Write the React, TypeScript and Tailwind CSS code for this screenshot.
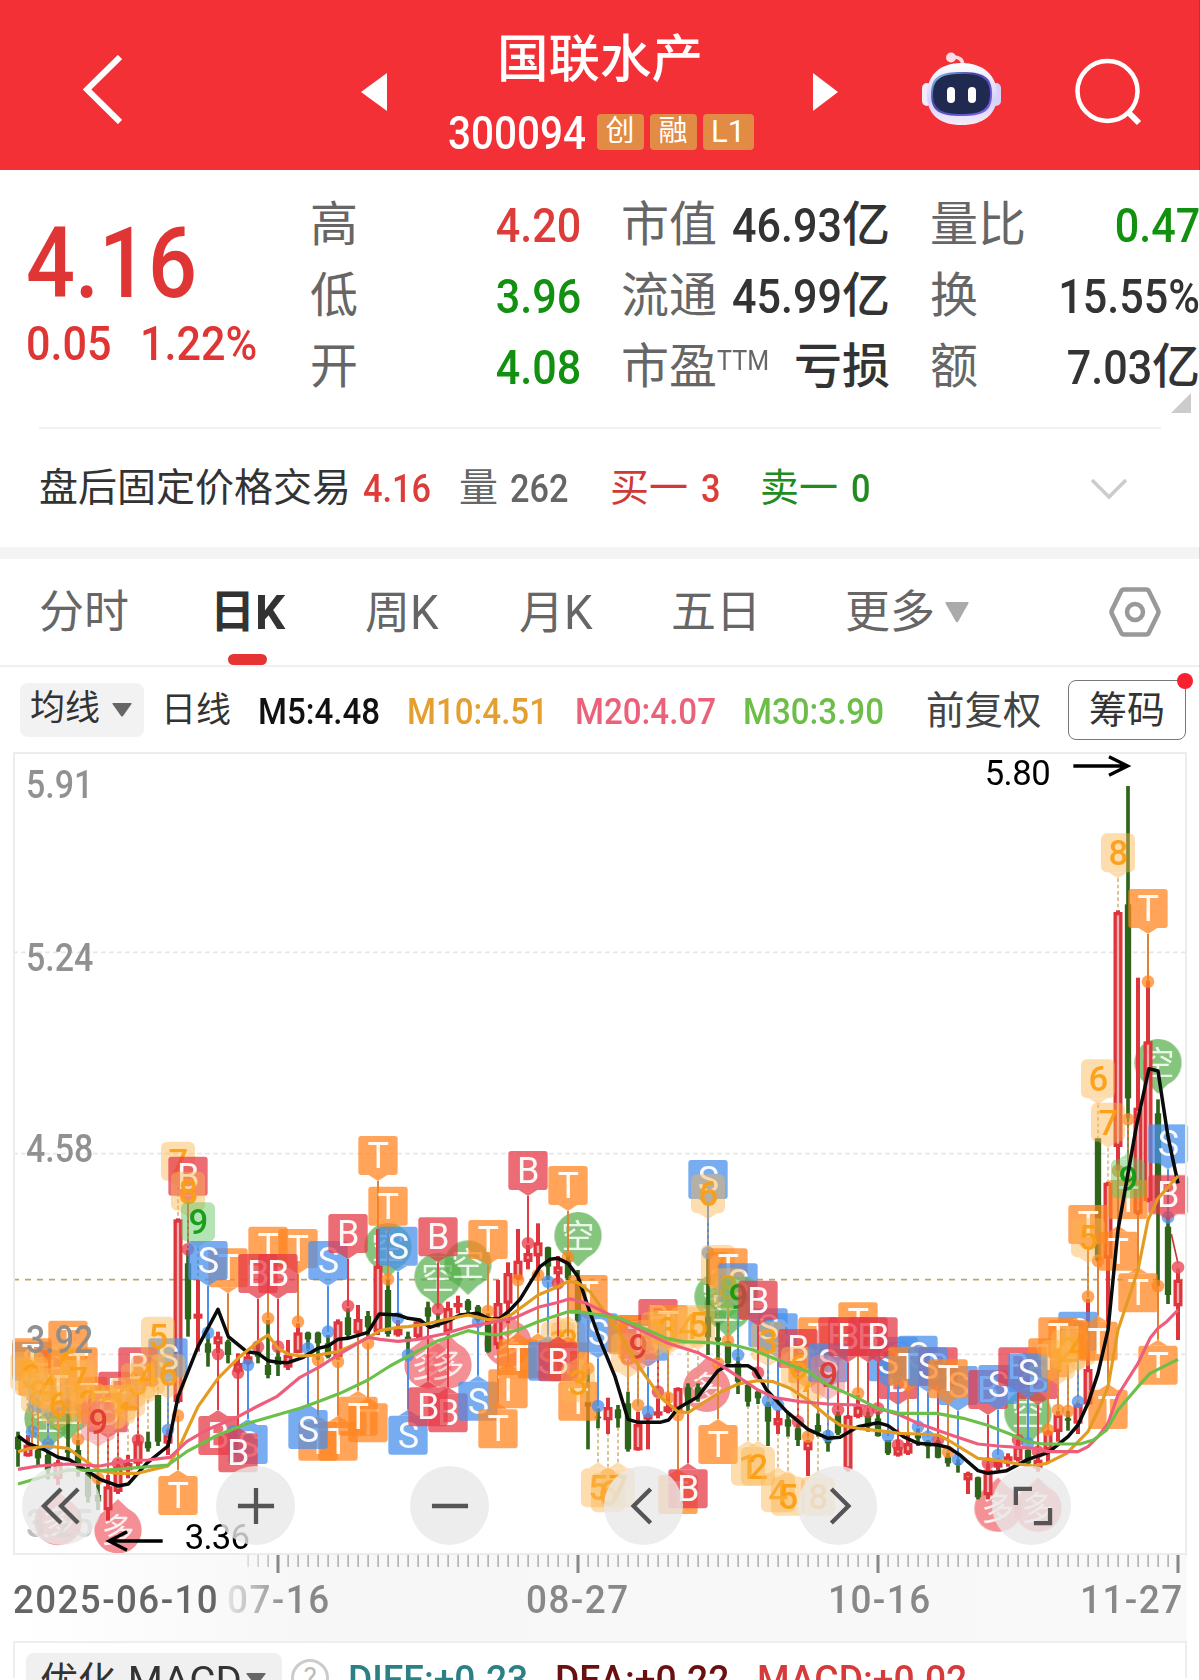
import { ReactNode } from 'react';

type Candle = [number, number, number, number, number]; // up, high, bodyTop, bodyBottom, low
type Pin = [string, number, number, number, number?]; // label, x, box top, stem end, dot

const CANDLES: Candle[] = [
  [0, 905, 920, 958, 1010], [1, 915, 945, 978, 980], [0, 950, 960, 985, 1010], [0, 965, 975, 1020, 1048],
  [1, 990, 998, 1046, 1065], [0, 850, 960, 968, 985], [0, 930, 960, 1010, 1040], [0, 1010, 1028, 1100, 1118],
  [0, 1050, 1095, 1115, 1140], [1, 1035, 1070, 1140, 1172], [1, 1000, 1010, 1085, 1092], [1, 975, 1000, 1020, 1045],
  [1, 915, 935, 1000, 1010], [0, 905, 935, 955, 965], [0, 795, 795, 935, 948], [1, 900, 915, 940, 975],
  [1, 265, 269, 815, 820], [0, 360, 400, 568, 620], [1, 450, 552, 565, 665], [0, 610, 640, 668, 710],
  [1, 605, 620, 642, 670], [0, 630, 635, 675, 700], [1, 670, 700, 725, 730], [1, 660, 680, 700, 705],
  [0, 640, 665, 680, 700], [0, 570, 705, 735, 745], [0, 655, 680, 705, 738], [1, 630, 675, 712, 720],
  [1, 580, 608, 668, 670], [0, 605, 608, 628, 660], [0, 605, 608, 640, 690], [0, 615, 640, 680, 685],
  [1, 568, 575, 680, 690], [0, 535, 562, 615, 625], [1, 525, 568, 610, 620], [0, 543, 558, 592, 625],
  [1, 297, 408, 605, 615], [0, 450, 480, 612, 620], [1, 570, 598, 615, 620], [0, 605, 620, 635, 675],
  [1, 568, 575, 620, 630], [0, 515, 532, 560, 580], [0, 550, 570, 580, 592], [1, 515, 535, 605, 615],
  [1, 497, 520, 525, 550], [0, 507, 512, 540, 550], [0, 525, 530, 570, 575], [0, 550, 560, 665, 668],
  [1, 450, 520, 645, 658], [1, 397, 430, 520, 580], [1, 297, 393, 445, 450], [1, 345, 370, 395, 418],
  [1, 280, 338, 378, 440], [0, 350, 352, 410, 450], [1, 378, 410, 432, 460], [0, 375, 390, 445, 450],
  [0, 420, 450, 572, 578], [0, 715, 815, 830, 958], [0, 835, 860, 865, 895], [1, 803, 832, 870, 912],
  [0, 825, 838, 865, 893], [0, 785, 820, 958, 965], [1, 845, 883, 960, 962], [1, 848, 855, 868, 958],
  [1, 805, 845, 852, 865], [1, 790, 830, 845, 850], [1, 772, 775, 848, 850], [0, 760, 772, 820, 850],
  [0, 760, 772, 800, 815], [0, 368, 560, 622, 675], [0, 577, 622, 632, 690], [0, 632, 635, 700, 705],
  [0, 680, 700, 755, 792], [0, 760, 765, 815, 830], [0, 780, 785, 805, 822], [0, 815, 822, 875, 948],
  [1, 840, 865, 885, 912], [0, 850, 868, 890, 920], [0, 880, 895, 930, 948], [1, 930, 935, 960, 1038],
  [0, 850, 885, 905, 920], [0, 900, 915, 940, 965], [0, 845, 855, 910, 915], [1, 855, 858, 1018, 1025],
  [1, 795, 830, 860, 865], [0, 845, 858, 890, 905], [0, 845, 865, 918, 920], [0, 930, 930, 970, 975],
  [1, 930, 952, 976, 980], [1, 915, 940, 970, 975], [0, 895, 915, 925, 948], [0, 930, 935, 950, 985],
  [0, 930, 935, 983, 985], [0, 968, 980, 1000, 1010], [0, 988, 1000, 1005, 1028], [1, 1025, 1030, 1050, 1092],
  [0, 1040, 1042, 1102, 1108], [1, 1000, 1020, 1095, 1108], [1, 985, 995, 1012, 1020], [1, 970, 980, 1000, 1010],
  [1, 930, 950, 990, 995], [0, 950, 960, 1000, 1003], [1, 970, 990, 1015, 1025], [1, 900, 905, 960, 1000],
  [1, 843, 855, 905, 935], [0, 843, 865, 872, 902], [1, 818, 824, 880, 912], [1, 507, 718, 822, 825],
  [0, 25, 25, 390, 395], [1, 155, 159, 385, 600], [1, -659, -653, 50, 122], [0, -1033, -677, -95, -35],
  [1, -457, -66, 250, 255], [1, -448, -265, 212, 217], [0, -92, -50, 205, 468], [0, 262, 290, 495, 522],
  [1, 415, 450, 528, 630],
];

const MA5 =
  '54,918 84,940 130,958 174,982 210,990 260,1022 300,1048 355,1068 385,1062 440,1000 504,948 534,800 594,650 654,538 685,620 740,665 774,670 804,692 834,697 864,698 910,682 954,655 984,648 1014,628 1044,625 1104,607 1138,552 1194,555 1224,565 1260,570 1290,592 1340,575 1380,555 1434,550 1470,568 1500,565 1530,540 1560,508 1620,410 1650,388 1674,385 1704,400 1734,440 1764,530 1800,630 1845,740 1884,868 1914,877 1980,877 2006,870 2034,835 2094,800 2154,722 2180,707 2244,707 2265,720 2300,780 2360,845 2424,898 2484,925 2520,922 2574,890 2634,878 2664,887 2710,920 2754,940 2814,945 2844,952 2880,975 2934,1022 2964,1030 3020,1022 3084,988 3144,968 3204,920 3234,885 3264,820 3294,730 3324,600 3354,300 3384,130 3409,-10 3447,-184 3474,-177 3504,20 3534,160';
const MA10 =
  '54,965 90,955 140,948 204,955 260,995 300,1022 354,1030 414,1030 444,1022 504,1008 534,960 594,830 654,745 714,685 774,635 804,615 834,655 864,672 900,678 954,675 1014,665 1060,645 1110,620 1140,602 1194,592 1224,590 1280,582 1330,570 1404,555 1460,568 1500,570 1540,550 1614,495 1674,470 1704,455 1734,458 1770,485 1820,555 1860,610 1884,655 1914,705 1980,800 2034,845 2064,848 2100,825 2154,790 2214,762 2274,752 2320,755 2370,775 2424,810 2484,860 2520,885 2574,895 2634,902 2700,910 2754,912 2814,915 2844,930 2934,985 3000,992 3054,1002 3100,1008 3140,1000 3200,970 3264,905 3300,830 3324,770 3354,600 3414,420 3444,270 3474,205 3534,138';
const MA20 =
  '54,1018 114,1008 204,1002 300,1008 384,992 444,990 510,982 560,935 620,900 714,860 774,828 830,800 900,742 960,710 1014,675 1104,622 1140,628 1194,634 1254,628 1330,612 1404,590 1460,580 1540,565 1614,532 1670,518 1710,506 1760,520 1800,540 1900,590 2004,640 2094,668 2154,700 2214,740 2274,780 2324,803 2400,815 2484,822 2574,825 2634,835 2700,855 2754,880 2844,912 2934,942 2994,948 3100,955 3144,965 3234,965 3264,950 3294,920 3324,880 3354,795 3414,700 3450,625 3474,595 3500,575 3534,540';
const MA30 =
  '54,1062 130,1040 204,1020 300,1022 384,1015 504,1005 560,965 654,915 744,880 830,855 900,835 954,815 1020,790 1104,750 1170,708 1240,670 1314,632 1404,602 1440,610 1490,615 1554,600 1614,575 1704,545 1734,545 1800,555 1860,565 1920,590 2000,625 2050,635 2130,638 2200,645 2260,660 2334,690 2424,725 2484,765 2574,805 2634,835 2700,850 2760,850 2810,850 2890,865 2960,885 3030,912 3080,935 3130,942 3240,942 3280,930 3320,900 3354,840 3414,770 3450,730 3534,688';

// round signals: 空 above the bar, 多 below it
const BUBBLES: [string, number, number][] = [
  ['空', 144, 865], ['空', 204, 840], ['空', 1164, 350], ['空', 1314, 440], ['空', 1404, 402], ['空', 1734, 317],
  ['空', 2154, 500], ['空', 2184, 530], ['空', 3084, 850], ['空', 3474, -202],
  ['多', 174, 1175], ['多', 354, 1200], ['多', 1284, 705], ['多', 1344, 705], ['多', 1524, 640], ['多', 2120, 775],
  ['多', 2994, 1135], ['多', 3114, 1135],
];

const PINS: Pin[] = [
  ['S', 96, 635, 905, 1], ['B', 174, 660, 990], ['T', 204, 572, 850], ['T', 114, 680, 950], ['T', 96, 625, 950],
  ['T', 234, 652, 928, 1], ['S', 144, 730, 943, 1], ['T', 174, 718, 990], ['T', 264, 740, 1010],
  ['B', 354, 725, 1000, 1], ['T', 294, 765, 1045, 1], ['B', 324, 790, 1035],
  ['8', 82, 665, 905], ['3', 94, 680, 905], ['8', 114, 730, 950], ['4', 144, 715, 960],
  ['S', 504, 625, 900, 1], ['B', 414, 652, 930, 1],
  ['6', 174, 765, 990], ['6', 204, 640, 850], ['7', 234, 690, 930], ['2', 264, 760, 1010], ['3', 324, 780, 1035],
  ['5', 474, 560, 795],
  ['1', 354, 765, 1000], ['2', 384, 742, 975], ['3', 414, 700, 915], ['4', 444, 675, 905], ['6', 504, 672, 900],
  ['9r', 294, 815, 1050],
  ['7', 534, 35, 265], ['B', 564, 80, 358, 1], ['8', 564, 125, 360], ['9g', 594, 217, 450],
  ['T', 684, 355, 630], ['S', 624, 333, 608, 1], ['T', 804, 290, 565, 1], ['T', 894, 297, 575, 1],
  ['B', 774, 372, 650, 1], ['B', 834, 372, 650, 1],
  ['T', 534, 1038, 857, 1], ['B', 654, 858, 672, 1], ['S', 744, 885, 705, 1], ['B', 714, 910, 728, 1],
  ['S', 984, 333, 605, 1], ['B', 1044, 252, 528, 1], ['T', 1134, 18, 297], ['T', 1164, 170, 448, 1],
  ['S', 1194, 290, 565, 1], ['B', 1314, 262, 538, 1], ['T', 1464, 270, 543, 1], ['B', 1584, 63, 340, 1],
  ['T', 1704, 108, 382, 1], ['T', 1764, 435, 715, 1],
  ['T', 954, 875, 690, 1], ['T', 1014, 875, 695, 1], ['S', 924, 840, 655, 1], ['T', 1104, 820, 640, 1],
  ['T', 1074, 800, 620], ['S', 1224, 857, 675, 1], ['B', 1344, 790, 615], ['B', 1284, 772, 580],
  ['S', 1434, 755, 575, 1], ['T', 1494, 838, 660], ['T', 1524, 718, 580], ['T', 1614, 628, 435, 1],
  ['T', 1554, 628, 450, 1], ['S', 1644, 635, 455, 1], ['1', 1674, 575, 470], ['2', 1704, 575, 450],
  ['T', 1704, 637, 450], ['B', 1674, 637, 460, 1], ['T', 1734, 755, 578], ['3', 1734, 700, 578],
  ['5', 1794, 1015, 895], ['6', 1824, 1030, 912], ['7', 1854, 1015, 893],
  ['S', 1794, 550, 828, 1], ['T', 1884, 555, 785], ['T', 1914, 555, 825, 1], ['B', 1974, 507, 785, 1],
  ['S', 1944, 575, 845, 1], ['T', 2004, 525, 803, 1], ['T', 1914, 570, 825],
  ['8', 1884, 610, 785], ['9r', 1914, 590, 845], ['1', 1974, 545, 805], ['3', 2004, 540, 790], ['4', 2064, 530, 760],
  ['5', 2094, 525, 760], ['T', 2034, 1035, 855, 1], ['B', 2064, 1018, 850], ['T', 2154, 885, 700, 1],
  ['S', 2124, 90, 368, 1], ['6', 2124, 133, 368], ['7', 2154, 345, 577], ['T', 2184, 355, 632, 1],
  ['S', 2214, 400, 675, 1], ['8', 2184, 415, 632], ['9g', 2214, 440, 680],
  ['S', 2334, 550, 825, 1], ['S', 2304, 535, 812, 1], ['3', 2304, 575, 815], ['B', 2274, 452, 728, 1],
  ['T', 2454, 562, 850], ['T', 2424, 642, 920, 1], ['7', 2424, 690, 930], ['B', 2394, 597, 875, 1], ['6', 2394, 650, 880],
  ['B', 2514, 562, 840, 1], ['S', 2484, 640, 918, 1], ['9r', 2484, 675, 900],
  ['T', 2574, 517, 790, 1], ['B', 2544, 562, 855], ['B', 2694, 690, 945, 1], ['S', 2694, 620, 895], ['S', 2664, 637, 918, 1],
  ['B', 2604, 562, 845, 1], ['B', 2634, 562, 835, 1],
  ['1', 2244, 950, 830], ['2', 2274, 950, 822], ['4', 2334, 1030, 912], ['5', 2364, 1040, 920], ['8', 2454, 1040, 920],
  ['S', 2754, 617, 890, 1], ['T', 2724, 650, 915],
  ['B', 2814, 652, 930, 1], ['S', 2784, 652, 920, 1], ['S', 2874, 708, 988, 1], ['T', 2844, 688, 965, 1],
  ['B', 2964, 720, 1000, 1], ['S', 2994, 705, 975, 1], ['B', 3054, 652, 930, 1], ['B', 3114, 690, 965, 1],
  ['T', 3144, 625, 900, 1], ['S', 3084, 670, 940, 1], ['S', 3234, 545, 815, 1], ['T', 3204, 570, 843, 1],
  ['T', 3174, 562, 840, 1], ['1', 3174, 630, 843], ['2', 3204, 600, 843], ['4', 3234, 590, 818],
  ['T', 3294, 575, 392, 1], ['T', 3264, 225, 500, 1], ['5', 3264, 265, 507], ['T', 3324, 780, 600],
  ['T', 3384, 150, -32, 1], ['T', 3354, 305, 122, 1], ['9g', 3384, 88, -35], ['T', 3414, 430, 255],
  ['T', 3474, 647, 468, 1], ['S', 3504, -17, 262, 1], ['B', 3504, 135, 262],
  ['6', 3294, -212, 25], ['7', 3324, -82, 155], ['8', 3354, -890, -659], ['T', 3444, -723, -445, 1],
];

const PIN_COLORS: Record<string, string> = { T: '#ff8520', B: '#e63946', S: '#4a8fec' };

function PinMark({ pin: [kind, x, top, end, dot] }: { pin: Pin }) {
  const label = kind[0];
  const isNumber = label >= '0' && label <= '9';
  const below = top > end;
  const w = isNumber ? 102 : 118;
  const h = 117;
  const edge = below ? top : top + h;
  const tip = below ? top - 18 : top + h + 18;
  let fill = isNumber ? '#fbb550' : PIN_COLORS[label];
  let color = isNumber ? '#fb9e14' : '#fff';
  let stem = isNumber ? '#c9a45c' : fill;
  if (label === 'T') stem = '#dd8238';
  if (kind === '9g') {
    fill = '#5cc25c';
    color = '#109a14';
    stem = '#3f9a5c';
  }
  if (kind === '9r') {
    fill = '#f4777f';
    color = '#e03a30';
  }
  return (
    <g>
      <line
        x1={x}
        x2={x}
        y1={tip}
        y2={end}
        stroke={stem}
        strokeWidth={isNumber ? 4 : 6}
        strokeDasharray={isNumber ? '11 8' : undefined}
      />
      {dot && <circle cx={x} cy={end} r={19} fill={fill} opacity={0.75} />}
      <g fill={fill} opacity={isNumber ? 0.46 : 0.74}>
        <rect x={x - w / 2} y={top} width={w} height={h} rx={isNumber ? 18 : 9} />
        <polygon points={`${x - 28},${edge} ${x + 28},${edge} ${x},${tip}`} />
      </g>
      <text
        x={x + 1}
        y={top + 96}
        textAnchor="middle"
        fontSize={isNumber ? 104 : 108}
        fontWeight={isNumber ? 500 : 400}
        fill={color}
        opacity={0.95}
      >
        {label}
      </text>
    </g>
  );
}

function Bubble({ label, x, y }: { label: string; x: number; y: number }) {
  const long = label === '多';
  const s = long ? -1 : 1;
  return (
    <g opacity={0.72}>
      <g fill={long ? '#f0666c' : '#56ae4c'}>
        <circle cx={x} cy={y} r={71} />
        <polygon points={`${x - 34},${y + s * 60} ${x + 34},${y + s * 60} ${x},${y + s * 93}`} />
      </g>
      <text x={x} y={y + 36} textAnchor="middle" fontSize={100} fill="#fff" opacity={0.85}>
        {label}
      </text>
    </g>
  );
}

function KLineChart() {
  // 3 units per pixel, one bar every 30 units
  return (
    <svg
      viewBox="39 -1134 3519 2406"
      className="block h-[802px] w-[1173px] overflow-visible"
      fontFamily='Roboto, "Noto Sans CJK SC", sans-serif'
    >
      {[-533, 71, 673].map((y) => (
        <line key={y} x1={39} x2={3558} y1={y} y2={y} stroke="#e6e6e6" strokeWidth={5} strokeDasharray="14 10" />
      ))}
      <line x1={39} x2={3558} y1={449} y2={449} stroke="#bfa568" strokeWidth={5} strokeDasharray="18 18" />

      {BUBBLES.map(([label, x, y]) => (
        <Bubble key={`${label}${x}`} label={label} x={x} y={y} />
      ))}

      {CANDLES.map(([up, high, top, bottom, low], i) => {
        const x = 54 + i * 30;
        return up ? (
          <g key={i} stroke="#de343b" fill="#fff">
            <line x1={x} x2={x} y1={high} y2={low} strokeWidth={12} />
            <rect x={x - 8.5} y={top + 4} width={17} height={Math.max(bottom - top - 8, 3)} strokeWidth={10} fillOpacity={0.6} />
          </g>
        ) : (
          <g key={i} fill="#2f651b">
            <rect x={x - 5.5} y={high} width={11} height={low - high} />
            <rect x={x - 9.5} y={top} width={19} height={bottom - top} />
          </g>
        );
      })}

      {PINS.map((pin, i) => (
        <PinMark key={i} pin={pin} />
      ))}
      <line x1={3514} y1={312} x2={3534} y2={400} stroke="#c23a33" strokeWidth={5} />
      <circle cx={3534} cy={412} r={19} fill="#ec5360" opacity={0.85} />

      <g fill="none" strokeWidth={9.5} strokeLinejoin="round">
        <polyline points={MA5} stroke="#0b0b0b" strokeWidth={10.5} />
        <polyline points={MA10} stroke="#e39c1f" />
        <polyline points={MA20} stroke="#ee5e7c" />
        <polyline points={MA30} stroke="#6cc04a" />
      </g>

      <g fontSize={114} fontWeight={500} fill="#8c8c8c" opacity={0.95}>
        <text x={78} y={-996} textLength={202} lengthAdjust="spacingAndGlyphs">5.91</text>
        <text x={78} y={-477} textLength={202} lengthAdjust="spacingAndGlyphs">5.24</text>
        <text x={78} y={97} textLength={202} lengthAdjust="spacingAndGlyphs">4.58</text>
        <text x={78} y={669} textLength={202} lengthAdjust="spacingAndGlyphs">3.92</text>
        <text x={78} y={1220} textLength={202} lengthAdjust="spacingAndGlyphs" opacity={0.6}>3.25</text>
      </g>

      <g fontSize={104} fill="#000">
        <text x={2954} y={-1034} textLength={198}>5.80</text>
        <text x={554} y={1258} textLength={196}>3.36</text>
      </g>
      <g fill="none" stroke="#000" strokeWidth={10}>
        <path d="M3220-1092h160M3327-1120l56 28l-56 28" />
        <path d="M488 1233H330M381 1205l-54 28l54 28" />
      </g>
    </svg>
  );
}

function Num({ children, className = '' }: { children: ReactNode; className?: string }) {
  return <span className={`inline-block origin-left scale-x-[.88] font-medium whitespace-nowrap ${className}`}>{children}</span>;
}

function Caret({ className }: { className: string }) {
  return (
    <svg viewBox="0 0 20 14" preserveAspectRatio="none" className={className}>
      <path d="M1 0h18q1 0 .5 1L11 13q-1 1-2 0L.5 1Q0 0 1 0z" fill="currentColor" />
    </svg>
  );
}

function Header() {
  return (
    <header className="flex h-[170px] bg-[#f23036] text-white">
      <svg viewBox="0 0 39 69" className="mt-[55px] ml-[83px] h-[69px] w-[39px]">
        <path d="M37 2L4 34.500L37 67" fill="none" stroke="currentColor" strokeWidth="6" />
      </svg>
      <svg viewBox="0 0 26 38" className="mt-[73px] ml-[239px] h-[38px] w-[26px]">
        <path d="M26 0v38L0 19z" fill="currentColor" />
      </svg>
      <div className="flex w-[426px] flex-col items-center pt-[32px]">
        <h1 className="text-[51.500px] leading-[56px] font-medium">国联水产</h1>
        <div className="mt-[26px] ml-px flex h-[36px] w-[306px] items-center gap-[6px]">
          <Num className="w-[143px] pt-[2px] text-[46px] leading-[36px]">300094</Num>
          <span className="flex h-[36px] w-[47px] items-center justify-center rounded bg-[#e28b45] text-[29px]">创</span>
          <span className="flex h-[36px] w-[47px] items-center justify-center rounded bg-[#e28b45] text-[29px]">融</span>
          <span className="flex h-[36px] w-[51px] items-center justify-center rounded bg-[#e28b45] text-[31px]">L1</span>
        </div>
      </div>
      <svg viewBox="0 0 25 38" className="mt-[73px] h-[38px] w-[25px]">
        <path d="M0 0v38L25 19z" fill="currentColor" />
      </svg>
      <svg viewBox="0 0 80 74" className="mt-[52px] ml-[84px] h-[74px] w-[80px]">
        <defs>
          <linearGradient id="shell" x1="0" y1="0" x2="0" y2="1">
            <stop offset="0" stopColor="#fff" />
            <stop offset=".6" stopColor="#d6cffb" />
            <stop offset="1" stopColor="#f4ecf7" />
          </linearGradient>
          <linearGradient id="visor" x1="0" y1="0" x2="1" y2="1">
            <stop offset="0" stopColor="#8fd8ee" />
            <stop offset=".35" stopColor="#4a46a8" />
            <stop offset="1" stopColor="#7c63ee" />
          </linearGradient>
        </defs>
        <path d="M29 5q12-1 12 9" fill="none" stroke="#fbdbe4" strokeWidth="3.500" />
        <circle cx="29" cy="5.500" r="5" fill="#fbdbe4" />
        <rect x="0" y="31" width="10" height="23" rx="5" fill="#f1ebfd" />
        <rect x="69" y="31" width="10" height="23" rx="5" fill="#d9d0fa" />
        <path d="M39.500 11C61 11 75 23 75 43S61 73 39.500 73 5 63 5 43 18 11 39.500 11z" fill="url(#shell)" />
        <path d="M39.500 20C62 20 70 25 70 42S62 64 39.500 64 9 59 9 42s8-22 30.500-22z" fill="url(#visor)" />
        <path d="M39.500 22C60 22 68 27 68 42s-8 20-28.500 20S11 57 11 42s8-20 28.500-20z" fill="#202a50" />
        <rect x="25" y="35" width="8" height="16" rx="4" fill="#fff" />
        <rect x="46" y="35" width="8" height="16" rx="4" fill="#fff" />
      </svg>
      <svg viewBox="0 0 68 68" className="mt-[58px] ml-[73px] h-[68px] w-[68px]" fill="none" stroke="currentColor" strokeWidth="4.500">
        <circle cx="32.500" cy="33" r="30" />
        <path d="M53 54L64 65" strokeWidth="6" />
      </svg>
    </header>
  );
}

function Row({ label, children }: { label: ReactNode; children: ReactNode }) {
  return (
    <div className="flex h-[71px] items-center justify-between">
      <span className="text-[48px] leading-[71px] whitespace-nowrap text-[#666]">{label}</span>
      <span className="flex items-center pt-px text-[49px] leading-[71px] font-medium whitespace-nowrap">{children}</span>
    </div>
  );
}

function Quote() {
  return (
    <section className="relative flex h-[257px] overflow-hidden pt-[19px] text-[#333]">
      <div className="w-[310px] pl-[26px] text-[#e03535]">
        <div className="mt-[26px] h-[97px]">
          <Num className="scale-x-[.9] text-[98px] leading-[97px]">4.16</Num>
        </div>
        <div className="mt-[2px] flex h-[60px] items-center text-[49px]">
          <Num className="w-[114px]">0.05</Num>
          <Num>1.22%</Num>
        </div>
      </div>
      <div className="w-[271px]">
        <Row label="高"><Num className="origin-right text-[#dc3c3a]">4.20</Num></Row>
        <Row label="低"><Num className="origin-right text-[#12900f]">3.96</Num></Row>
        <Row label="开"><Num className="origin-right text-[#12900f]">4.08</Num></Row>
      </div>
      <div className="ml-[40px] w-[269px]">
        <Row label="市值"><Num className="origin-right">46.93</Num><span className="-mt-px text-[48px]">亿</span></Row>
        <Row label="流通"><Num className="origin-right">45.99</Num><span className="-mt-px text-[48px]">亿</span></Row>
        <div className="flex h-[71px] items-center justify-between leading-[71px] whitespace-nowrap">
          <span className="flex text-[48px] text-[#666]">
            市盈<span className="-mt-[5px] inline-block origin-left scale-x-[.93] text-[27px]">TTM</span>
          </span>
          <span className="text-[48px] font-medium">亏损</span>
        </div>
      </div>
      <div className="ml-[40px] w-[270px]">
        <Row label="量比"><Num className="origin-right text-[#12900f]">0.47</Num></Row>
        <Row label="换"><Num className="origin-right">15.55%</Num></Row>
        <Row label="额"><Num className="origin-right">7.03</Num><span className="-mt-px text-[48px]">亿</span></Row>
      </div>
      <svg viewBox="0 0 20 20" className="absolute right-[9px] bottom-[14px] size-5 text-[#ccc]">
        <path d="M20 0v20H0z" fill="currentColor" />
      </svg>
    </section>
  );
}

function AfterHours() {
  return (
    <section className="mx-[39px] flex h-[120px] items-center border-t-2 border-[#f1f1f1] pt-px text-[39px] whitespace-nowrap text-[#333]">
      <span className="w-[324px]">盘后固定价格交易</span>
      <Num className="w-[96px] pt-[2px] text-[39px] text-[#dc3c3a]">4.16</Num>
      <span className="w-[51px] text-[#666]">量</span>
      <Num className="w-[100px] pt-[2px] text-[39px] text-[#666]">262</Num>
      <span className="w-[91px] text-[#cf3a36]">买一</span>
      <Num className="w-[59px] pt-[2px] text-[39px] text-[#dc3c3a]">3</Num>
      <span className="w-[91px] text-[#228b1f]">卖一</span>
      <Num className="pt-[2px] text-[39px] text-[#228b1f]">0</Num>
      <svg viewBox="0 0 38 22" className="mr-[33px] ml-auto h-[22px] w-[38px]">
        <path d="M2 2l17 17L36 2" fill="none" stroke="#ccc" strokeWidth="3.500" />
      </svg>
    </section>
  );
}

function Tabs() {
  return (
    <nav className="flex h-[108px] items-center border-b-2 border-[#f0f0f0] text-[45px] whitespace-nowrap text-[#666]">
      <span className="ml-[39px] w-[171px] pt-[2px]">分时</span>
      <span className="relative flex h-full w-[155px] items-center pt-[2px] font-bold text-[#333]">
        日<span className="inline-block origin-left scale-x-[.97] text-[49px]">K</span>
        <i className="absolute bottom-0 left-[18px] h-[11px] w-[39px] rounded-full bg-[#e53433]" />
      </span>
      <span className="w-[154px] pt-[2px]">周<span className="inline-block origin-left scale-x-[.95] text-[48px]">K</span></span>
      <span className="w-[152px] pt-[2px]">月<span className="inline-block origin-left scale-x-[.95] text-[48px]">K</span></span>
      <span className="w-[174px] pt-[2px]">五日</span>
      <span className="pt-[2px]">更多</span>
      <Caret className="ml-[10px] h-[21px] w-[24px] text-[#aaa]" />
      <svg viewBox="0 0 52 50" className="mr-[39px] ml-auto h-[50px] w-[52px]" fill="none" stroke="#999" strokeWidth="4.500" strokeLinejoin="round">
        <path d="M15 2.500h22q2 0 3 2L49 23q1 2 0 4L40 45.500q-1 2-3 2H15q-2 0-3-2L3 27q-1-2 0-4L12 4.500q1-2 3-2z" />
        <circle cx="26" cy="25" r="8" />
      </svg>
    </nav>
  );
}

function Indicators() {
  return (
    <div className="flex h-[85px] items-center pl-[20px] whitespace-nowrap text-[#333]">
      <button className="flex h-[54px] w-[124px] items-center rounded-lg bg-[#f2f2f2] pl-[10px] text-[35px]">
        均线
        <Caret className="ml-[12px] h-[14px] w-[20px] text-[#666]" />
      </button>
      <span className="ml-[17px] w-[97px] pt-[4px] text-[35px]">日线</span>
      <Num className="w-[149px] scale-x-[.92] pt-[4px] text-[36px] text-[#111]">M5:4.48</Num>
      <Num className="w-[168px] scale-x-[.92] pt-[4px] text-[36px] text-[#e3a030]">M10:4.51</Num>
      <Num className="w-[168px] scale-x-[.92] pt-[4px] text-[36px] text-[#ea6279]">M20:4.07</Num>
      <Num className="w-[183px] scale-x-[.92] pt-[4px] text-[36px] text-[#6cbe49]">M30:3.90</Num>
      <span className="w-[142px] pt-[2px] text-[38.500px] text-[#444]">前复权</span>
      <button className="relative h-[60px] w-[118px] rounded-lg border border-[#777] text-[38px] leading-[58px]">
        筹码
        <i className="absolute -top-[8px] -right-[8px] size-4 rounded-full bg-[#fb2030]" />
      </button>
    </div>
  );
}

const ICONS = [
  'M19 2L1 20l18 18M37 2L19 20l18 18',
  'M20 1v38M1 20h38',
  'M1 20h38',
  'M27 2L9 20l18 18',
  'M13 2l18 18L13 38',
  'M20 2H3v17M39 22v16H22',
];

function Controls() {
  return (
    <div className="absolute top-[714px] left-[9px] flex gap-[115px]">
      {ICONS.map((d) => (
        <button key={d} className="flex size-[79px] items-center justify-center rounded-full bg-[#e8e8e8]/80">
          <svg viewBox="0 0 40 40" className="size-[38px] overflow-visible" fill="none" stroke="#555" strokeWidth="4.500">
            <path d={d} />
          </svg>
        </button>
      ))}
    </div>
  );
}

function TimeAxis() {
  return (
    <div className="mx-[13px] h-[86px] bg-linear-to-r from-white via-[#f7f7f7] via-25% to-[#f9f9f9]">
      <svg viewBox="0 0 1173 18" className="block h-[18px] w-[1173px]">
        {Array.from({ length: 94 }, (_, k) => {
          const major = k % 30 === 3;
          return (
            <rect
              key={k}
              x={235 + k * 10 - (major ? 1.5 : 0.5)}
              y={0}
              width={major ? 3 : 1.2}
              height={major ? 18 : 12}
              fill={major ? '#888' : '#999'}
              opacity={k < 3 ? 0.4 + k * 0.2 : 1}
            />
          );
        })}
      </svg>
      <div className="mt-[5px] flex text-[38px] leading-[44px] whitespace-nowrap text-[#888]">
        <Num className="w-[216px] scale-x-[.965] tracking-[1.500px] text-[#666]">2025-06-10</Num>
        <Num className="w-[302px] scale-x-[.97] tracking-[1.500px]">
          <span className="bg-linear-to-r from-[#e4e4e4] to-[#888] to-60% bg-clip-text text-transparent">07-16</span>
        </Num>
        <Num className="w-[304px] scale-x-[.97] tracking-[1.500px]">08-27</Num>
        <Num className="w-[255px] scale-x-[.97] tracking-[1.500px]">10-16</Num>
        <Num className="scale-x-[.97] tracking-[1.500px]">11-27</Num>
      </div>
    </div>
  );
}

function MacdPanel() {
  return (
    <div className="mx-[13px] h-[37px] border-2 border-b-0 border-[#eee]">
      <div className="flex h-[56px] items-start pt-[10px] pl-[11px] text-[38px] leading-[54px] whitespace-nowrap">
        <button className="flex h-[56px] w-[256px] items-center rounded-lg bg-[#f0f0f0] pl-[14px] text-[#333]">
          <span>优化</span>
          <span className="inline-block w-[130px] origin-left scale-x-[1.06]">MACD</span>
          <Caret className="-mt-[3px] h-[13px] w-[20px] text-[#666]" />
        </button>
        <span className="mt-[6px] ml-[9px] flex size-[38px] items-center justify-center rounded-full border-[3px] border-[#ccc] text-[28px] leading-none text-[#bbb]">?</span>
        <Num className="ml-[19px] w-[207px] scale-x-[.98] text-[#2b8086]">DIFF:+0.23</Num>
        <Num className="w-[202px] scale-x-[.98] text-[#6b1010]">DEA:+0.22</Num>
        <Num className="scale-x-[.98] text-[#d53b3a]">MACD:+0.02</Num>
      </div>
    </div>
  );
}

export default function App() {
  return (
    <main className="relative h-[1680px] w-[1200px] overflow-hidden bg-white font-[Roboto,'Noto_Sans_CJK_SC',sans-serif] [text-autospace:no-autospace]">
      <Header />
      <Quote />
      <AfterHours />
      <div className="h-[12px] bg-[#f4f4f4]" />
      <Tabs />
      <Indicators />
      <div className="relative mx-[13px] h-[803px]">
        <KLineChart />
        <div className="absolute inset-0 border-2 border-[#ececec]" />
        <Controls />
      </div>
      <TimeAxis />
      <MacdPanel />
      <div className="absolute inset-y-0 right-0 w-px bg-black/15" />
    </main>
  );
}
